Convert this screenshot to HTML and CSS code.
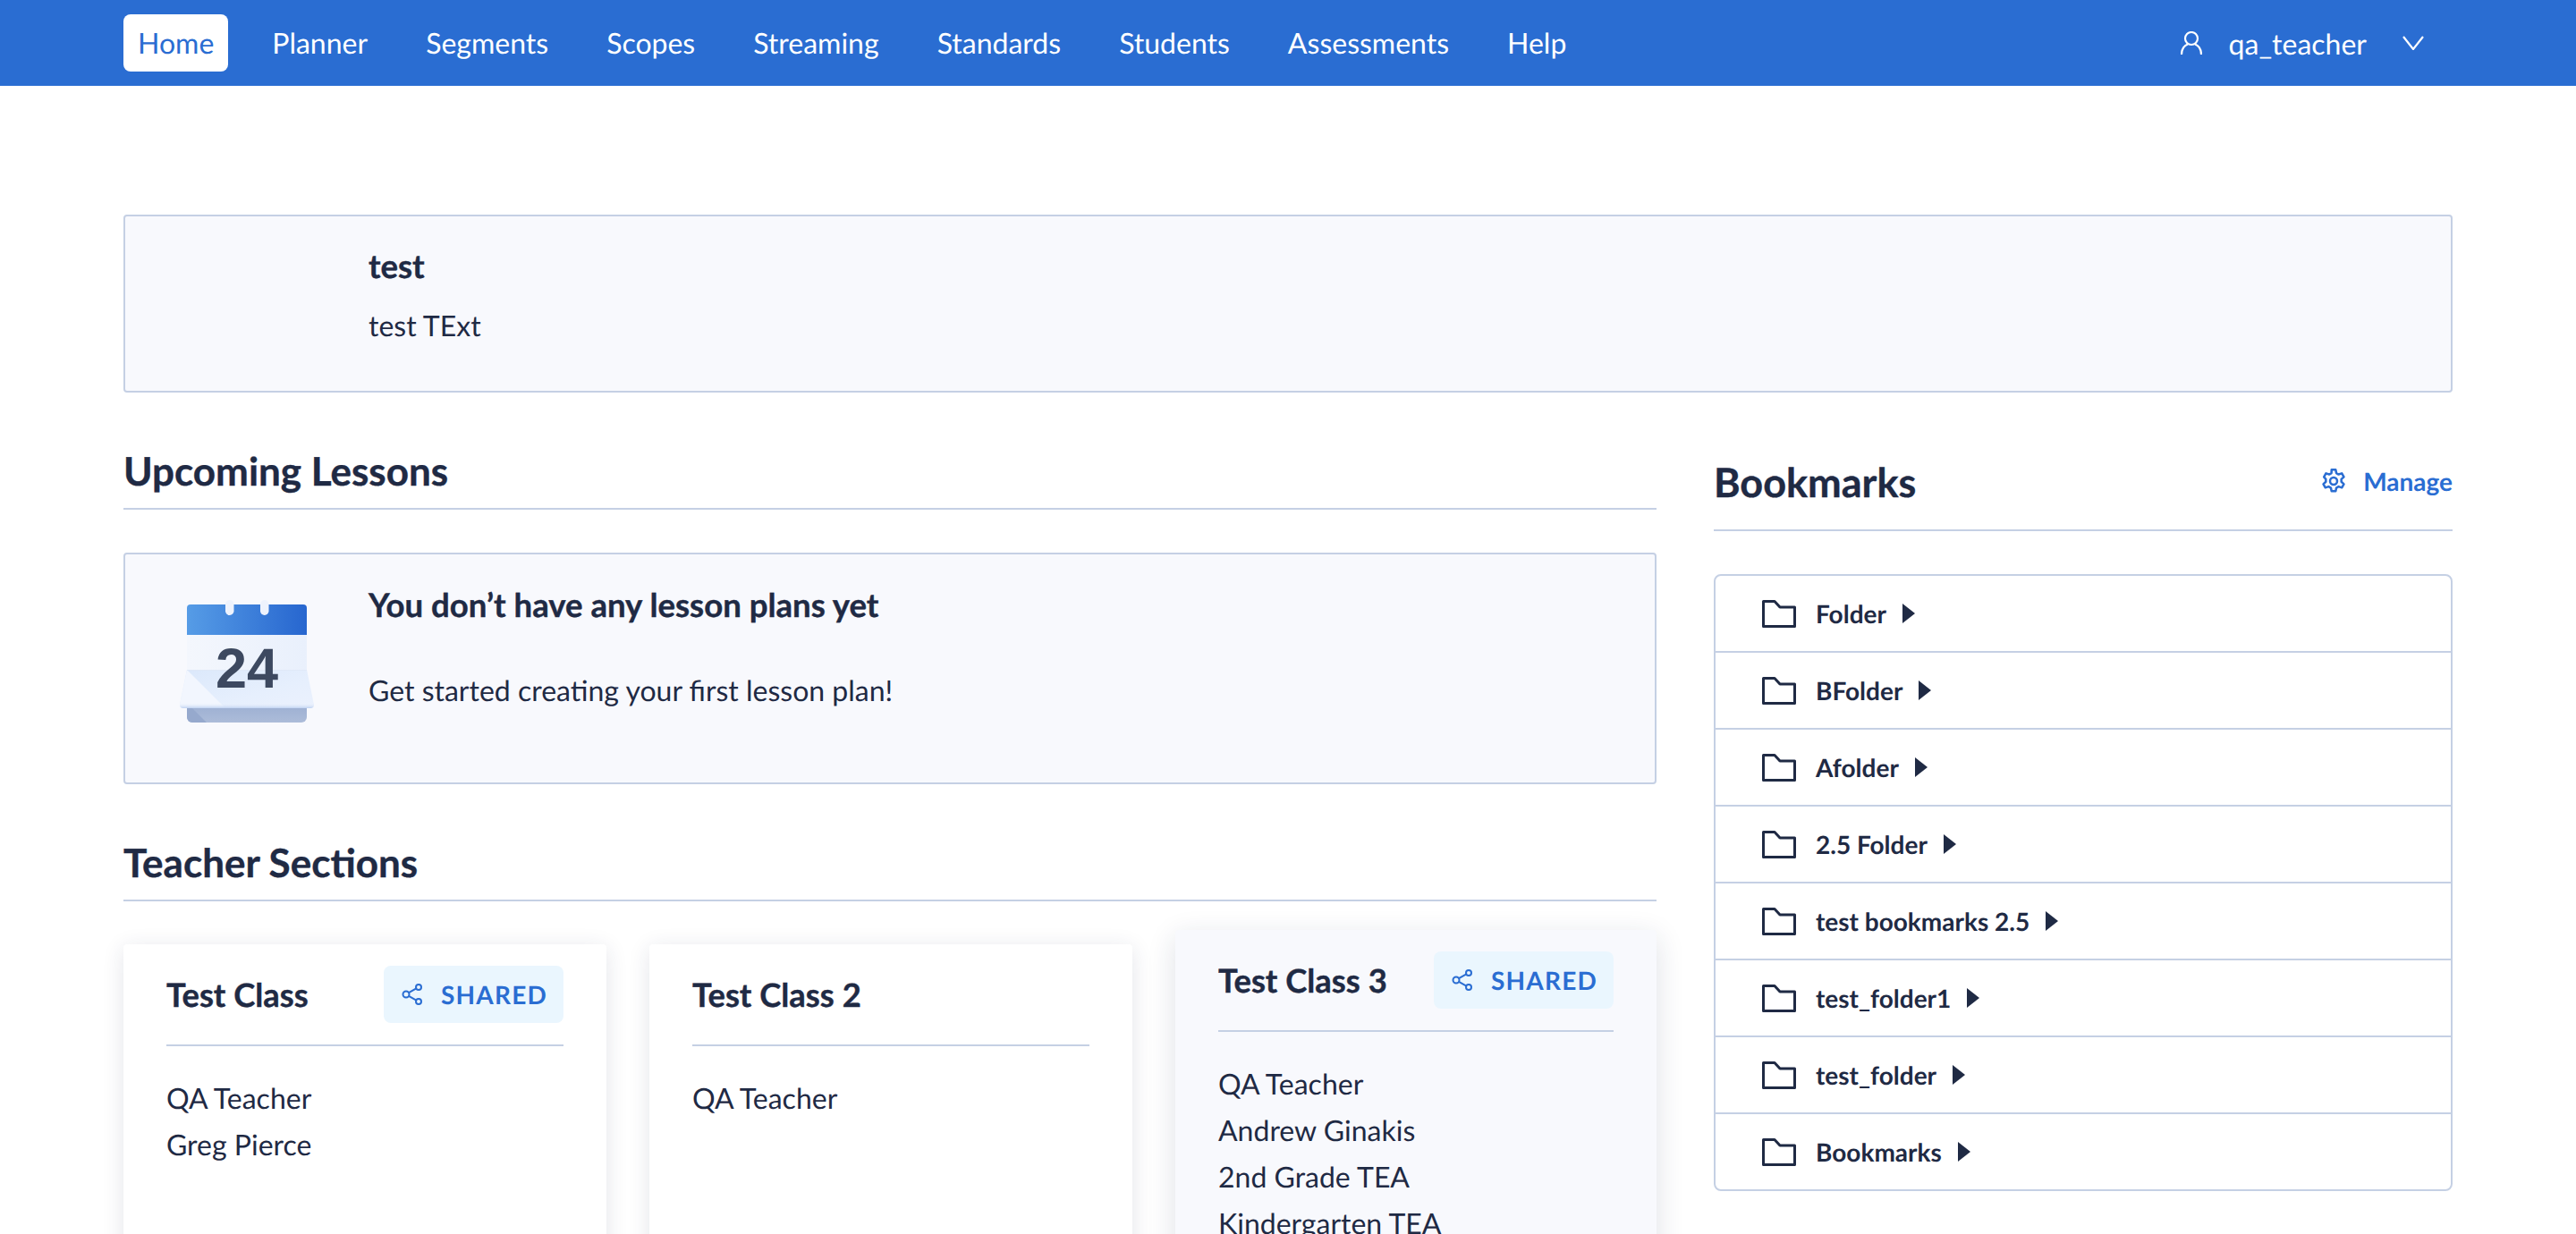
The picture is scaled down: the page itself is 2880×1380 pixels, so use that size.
FILE: index.html
```html
<!DOCTYPE html>
<html lang="en">
<head>
  <meta charset="UTF-8" />
  <title>Home</title>
  <link rel="stylesheet" href="styles.css">
</head>
<body>
  <svg class="defs" width="0" height="0">
    <symbol id="folder" viewBox="0 0 38 31">
      <path d="M1.5 29.5V1.500h12.500l6 6.500h16.500v21.500z" fill="none" stroke="#1f2a44" stroke-width="3" stroke-linejoin="round"/>
    </symbol>
    <symbol id="share" viewBox="0 0 24 24">
      <g fill="none" stroke="#2a6dd2" stroke-width="2">
        <circle cx="5" cy="12" r="3.500"/><circle cx="19" cy="4" r="3"/><circle cx="19" cy="20" r="3"/>
        <path d="M8 10.200l8.400-4.800M8 13.800l8.400 4.800"/>
      </g>
    </symbol>
  </svg>

  <nav class="topnav">
    <div class="navlinks">
      <a class="navlink active">Home</a>
      <a class="navlink">Planner</a>
      <a class="navlink">Segments</a>
      <a class="navlink">Scopes</a>
      <a class="navlink">Streaming</a>
      <a class="navlink">Standards</a>
      <a class="navlink">Students</a>
      <a class="navlink">Assessments</a>
      <a class="navlink">Help</a>
    </div>
    <div class="usermenu">
      <svg class="usericon" width="24" height="26" viewBox="0 0 24 26" fill="none" stroke="#fff" stroke-width="2.200">
        <circle cx="12" cy="8" r="7"/>
        <path d="M1 26c0-6.500 3.500-10.500 7-11.500M23 26c0-6.500-3.500-10.500-7-11.500"/>
      </svg>
      <span>qa_teacher</span>
      <svg class="caret" width="24" height="16" viewBox="0 0 24 16" fill="none" stroke="#fff" stroke-width="2.200">
        <path d="M1 1l11 14L23 1"/>
      </svg>
    </div>
  </nav>

  <main class="page">
    <section class="banner">
      <h3 class="boxtitle">test</h3>
      <p class="boxtext">test TExt</p>
    </section>

    <div class="columns">
      <div class="leftcol">
        <h2 class="heading">Upcoming Lessons</h2>
        <section class="empty">
          <svg class="calendar" width="150" height="138" viewBox="0 0 150 138">
            <defs>
              <linearGradient id="calTop" x1="0" y1="0" x2="1" y2="0">
                <stop offset="0" stop-color="#569ce6"/>
                <stop offset="1" stop-color="#2766cf"/>
              </linearGradient>
              <linearGradient id="calPage" x1="0" y1="0" x2="1" y2="0">
                <stop offset="0" stop-color="#f4f7fd"/>
                <stop offset="1" stop-color="#e9f0fc"/>
              </linearGradient>
              <linearGradient id="calFold" x1="0" y1="0" x2="1" y2="1">
                <stop offset="0" stop-color="#dbe8fb"/>
                <stop offset="0.600" stop-color="#e6effd"/>
                <stop offset="1" stop-color="#ebf1fd"/>
              </linearGradient>
              <linearGradient id="calLip" x1="0" y1="0" x2="0" y2="1">
                <stop offset="0" stop-color="#f0f5fe" stop-opacity="0"/>
                <stop offset="1" stop-color="#bfd2f1"/>
              </linearGradient>
              <linearGradient id="calBase" x1="0" y1="0" x2="0" y2="1">
                <stop offset="0" stop-color="#9fb1d3"/>
                <stop offset="1" stop-color="#acbcd9"/>
              </linearGradient>
            </defs>
            <path d="M8 120h134v11a6 6 0 0 1-6 6H14a6 6 0 0 1-6-6z" fill="url(#calBase)"/>
            <path d="M8 120h5l17 17H14a6 6 0 0 1-6-6z" fill="#96a9cd"/>
            <path d="M8 39h134v40H8z" fill="url(#calPage)"/>
            <path d="M8 9a4 4 0 0 1 4-4h126a4 4 0 0 1 4 4v30H8z" fill="url(#calTop)"/>
            <rect x="51" y="0" width="9.500" height="17" rx="4.700" fill="#eef3fd"/>
            <rect x="90" y="0" width="9.500" height="17" rx="4.700" fill="#eef3fd"/>
            <path d="M8 78h134l8 39a4 4 0 0 1-4 4H4a4 4 0 0 1-4-4z" fill="url(#calFold)"/>
            <path d="M8 78l43 43H4a4 4 0 0 1-4-4z" fill="#f2f6fe"/>
            <path d="M8 78h134v.800H8z" fill="#dfe7f6"/>
            <path d="M0 115h150v2a4 4 0 0 1-4 4H4a4 4 0 0 1-4-4z" fill="url(#calLip)"/>
            <text class="caldate" x="75" y="98" text-anchor="middle">24</text>
          </svg>
          <div class="emptybody">
            <h3 class="boxtitle">You don’t have any lesson plans yet</h3>
            <p class="boxtext emptytext">Get started creating your first lesson plan!</p>
          </div>
        </section>

        <h2 class="heading sections">Teacher Sections</h2>
        <div class="cards">
          <article class="card">
            <header class="cardhead">
              <h4 class="cardtitle">Test Class</h4>
              <span class="shared"><svg width="24" height="24"><use href="#share"/></svg>SHARED</span>
            </header>
            <ul class="names">
              <li>QA Teacher</li>
              <li>Greg Pierce</li>
            </ul>
          </article>
          <article class="card">
            <header class="cardhead">
              <h4 class="cardtitle">Test Class 2</h4>
            </header>
            <ul class="names">
              <li>QA Teacher</li>
            </ul>
          </article>
          <article class="card raised">
            <header class="cardhead">
              <h4 class="cardtitle">Test Class 3</h4>
              <span class="shared"><svg width="24" height="24"><use href="#share"/></svg>SHARED</span>
            </header>
            <ul class="names">
              <li>QA Teacher</li>
              <li>Andrew Ginakis</li>
              <li>2nd Grade TEA</li>
              <li>Kindergarten TEA</li>
            </ul>
          </article>
        </div>
      </div>

      <aside class="rightcol">
        <div class="bookhead">
          <h2 class="heading plain">Bookmarks</h2>
          <a class="manage">
            <svg width="28" height="28" viewBox="1.500 1.500 21 21" fill="none" stroke="#2a6dd2" stroke-width="1.900" stroke-linejoin="round">
              <path d="M10.300 2.500h3.400l.6 2.800 1.900 1.100 2.700-.9 1.700 3-2.100 1.900v2.200l2.100 1.900-1.700 3-2.700-.9-1.900 1.100-.6 2.800h-3.400l-.6-2.800-1.900-1.100-2.700.9-1.700-3 2.100-1.900v-2.200L3.900 8.500l1.700-3 2.700.9 1.900-1.100z"/>
              <circle cx="12" cy="12" r="3"/>
            </svg>
            Manage
          </a>
        </div>
        <ul class="folders">
          <li class="folder"><svg width="38" height="31"><use href="#folder"/></svg><span>Folder</span><i class="arrow"></i></li>
          <li class="folder"><svg width="38" height="31"><use href="#folder"/></svg><span>BFolder</span><i class="arrow"></i></li>
          <li class="folder"><svg width="38" height="31"><use href="#folder"/></svg><span>Afolder</span><i class="arrow"></i></li>
          <li class="folder"><svg width="38" height="31"><use href="#folder"/></svg><span>2.5 Folder</span><i class="arrow"></i></li>
          <li class="folder"><svg width="38" height="31"><use href="#folder"/></svg><span>test bookmarks 2.5</span><i class="arrow"></i></li>
          <li class="folder"><svg width="38" height="31"><use href="#folder"/></svg><span>test_folder1</span><i class="arrow"></i></li>
          <li class="folder"><svg width="38" height="31"><use href="#folder"/></svg><span>test_folder</span><i class="arrow"></i></li>
          <li class="folder"><svg width="38" height="31"><use href="#folder"/></svg><span>Bookmarks</span><i class="arrow"></i></li>
        </ul>
      </aside>
    </div>
  </main>
</body>
</html>
```

FILE: styles.css
```css
html, body {
  height: 100%;
  overflow: hidden;
}
body {
  margin: 0;
  font-family: Lato, "Open Sans", sans-serif;
  color: #1f2a44;
  background: #fff;
  text-rendering: geometricPrecision;
}
h2, h3, h4, p, ul {
  margin: 0;
  padding: 0;
}
ul {
  list-style: none;
}
.defs {
  position: absolute;
}

.topnav {
  display: flex;
  justify-content: space-between;
  align-items: center;
  height: 96px;
  padding: 0 138px;
  background: #2a6dd2;
  color: #fff;
  font-size: 32px;
}
.navlinks {
  display: flex;
  gap: 33px;
}
.navlink {
  display: block;
  padding: 0 16px;
  line-height: 64px;
  border-radius: 8px;
}
.navlink.active {
  background: #fff;
  color: #2a6dd2;
}
.usermenu {
  display: flex;
  align-items: center;
  padding-right: 32px;
}
.usericon {
  margin-right: 30px;
}
.caret {
  margin-left: 40px;
}

.page {
  padding: 144px 138px 0;
}
.banner {
  height: 199px;
  box-sizing: border-box;
  padding: 33px 272px;
  background: #f8f9fd;
  border: 2px solid #c5d0e4;
  border-radius: 4px;
}
.boxtitle {
  font-size: 36.600px;
  line-height: 44px;
  font-weight: 700;
  -webkit-text-stroke: 0.4px #1f2a44;
}
.boxtext {
  margin-top: 23px;
  font-size: 32px;
  line-height: 44px;
}

.columns {
  display: grid;
  grid-template-columns: 1714px 826px;
  gap: 64px;
  margin-top: 45px;
}
.heading {
  padding-top: 2px;
  font-size: 44px;
  line-height: 82px;
  font-weight: 700;
  border-bottom: 2px solid #c5d0e4;
  -webkit-text-stroke: 0.4px #1f2a44;
}
.heading.plain {
  font-size: 45px;
  border-bottom: none;
}
.heading.sections {
  margin-top: 45px;
}

.empty {
  display: flex;
  height: 259px;
  box-sizing: border-box;
  margin-top: 48px;
  padding: 34px 0 0 61px;
  background: #f8f9fd;
  border: 2px solid #c5d0e4;
  border-radius: 4px;
}
.calendar {
  margin-top: 17px;
}
.caldate {
  font-family: "Liberation Sans", sans-serif;
  font-size: 63px;
  font-weight: 700;
  fill: #3d4960;
}
.emptybody {
  margin-left: 61px;
}
.emptytext {
  margin-top: 52px;
}

.cards {
  display: grid;
  grid-template-columns: 540px 540px 1fr;
  gap: 48px;
  margin-top: 48px;
}
.card {
  min-height: 500px;
  box-sizing: border-box;
  padding: 24px 48px;
  background: #fff;
  border-radius: 4px;
  box-shadow: 0 4px 24px rgba(30, 45, 80, 0.12);
}
.card.raised {
  transform: translateY(-16px);
  background: #f8f9fd;
  box-shadow: 0 8px 32px rgba(30, 45, 80, 0.14);
}
.cardhead {
  display: flex;
  justify-content: space-between;
  align-items: center;
  height: 64px;
  padding-bottom: 24px;
  border-bottom: 2px solid #c5d0e4;
}
.cardtitle {
  font-size: 36.400px;
  font-weight: 700;
  -webkit-text-stroke: 0.4px #1f2a44;
}
.shared {
  display: flex;
  align-items: center;
  gap: 20px;
  height: 64px;
  padding: 0 18px 0 20px;
  background: #eaf6fe;
  border-radius: 8px;
  color: #2a6dd2;
  font-size: 28px;
  font-weight: 700;
  letter-spacing: 1.200px;
}
.names {
  margin-top: 32px;
  font-size: 32px;
  line-height: 52px;
}

.bookhead {
  display: flex;
  justify-content: space-between;
  align-items: center;
  height: 108px;
  border-bottom: 2px solid #c5d0e4;
}
.manage {
  display: flex;
  align-items: center;
  gap: 19px;
  color: #2a6dd2;
  font-size: 28px;
  font-weight: 700;
}
.folders {
  margin-top: 48px;
  border: 2px solid #c5d0e4;
  border-radius: 8px;
}
.folder {
  display: flex;
  align-items: center;
  height: 84px;
  padding-left: 52px;
  border-bottom: 2px solid #c5d0e4;
  font-size: 28px;
  font-weight: 700;
}
.folder:last-child {
  border-bottom: none;
}
.folder span {
  margin-left: 22px;
}
.arrow {
  width: 0;
  height: 0;
  margin-left: 18px;
  border-left: 14px solid #1f2a44;
  border-top: 11px solid transparent;
  border-bottom: 11px solid transparent;
}
```
